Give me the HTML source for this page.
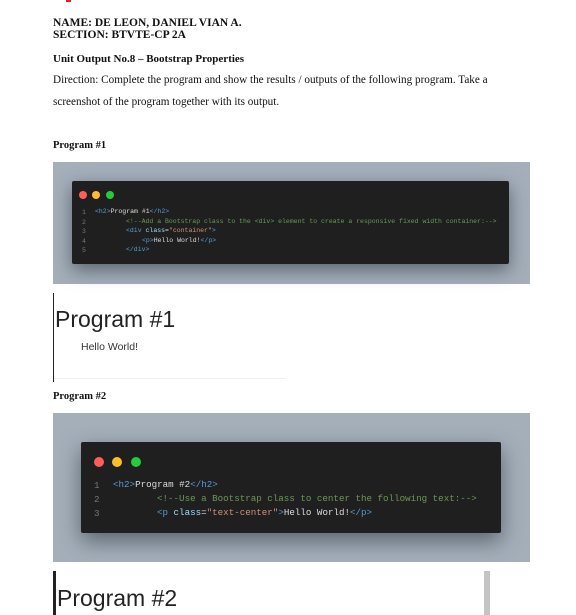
<!DOCTYPE html><html><head><style>
body{margin:0;width:576px;height:615px;background:#fff;position:relative;overflow:hidden;font-family:"Liberation Serif",serif;color:#111}
.a{position:absolute;white-space:nowrap}
.b{font-weight:bold}
.d{position:absolute;border-radius:50%}
.sans{font-family:"Liberation Sans",sans-serif}
.c1{position:absolute;font-family:"Liberation Mono",monospace;font-size:6.5px;color:#ddd;white-space:nowrap}
.c2{position:absolute;font-family:"Liberation Mono",monospace;font-size:9.2px;color:#ddd;white-space:nowrap}
.k{color:#569cd6}.g{color:#6a9955}.s{color:#ce9178}.n{color:#777}.t{color:#9cdcfe}
</style></head><body>
<div class="a" style="left:66px;top:0;width:5px;height:2px;background:#d22"></div>
<div class="a b" style="left:53px;top:17px;font-size:11.5px;line-height:12px">NAME: DE LEON, DANIEL VIAN A.<br>SECTION: BTVTE-CP 2A</div>
<div class="a b" style="left:53px;top:53px;font-size:11px">Unit Output No.8 – Bootstrap Properties</div>
<div class="a" style="left:53px;top:74px;font-size:11.2px">Direction: Complete the program and show the results / outputs of the following program. Take a</div>
<div class="a" style="left:53px;top:96px;font-size:11.2px">screenshot of the program together with its output.</div>
<div class="a b" style="left:53px;top:140px;font-size:10.5px">Program #1</div>

<div class="a" style="left:53px;top:162px;width:477px;height:122px;background:#a4afba"></div>
<div class="a" style="left:72px;top:181px;width:437px;height:83px;background:#1f1f1f;border-radius:2px;box-shadow:0 6px 18px rgba(40,50,60,.6)"></div>
<div class="d" style="left:79px;top:191px;width:8px;height:8px;background:#ff5f56"></div>
<div class="d" style="left:92px;top:191px;width:8px;height:8px;background:#ffbd2e"></div>
<div class="d" style="left:106px;top:191px;width:8px;height:8px;background:#27c93f"></div>
<div class="c1 n" style="left:82px;top:208px;line-height:9.6px">1<br>2<br>3<br>4<br>5</div>
<div class="c1" style="left:95px;top:208px"><span class="k">&lt;h2&gt;</span>Program #1<span class="k">&lt;/h2&gt;</span></div>
<div class="c1 g" style="left:126px;top:217.6px">&lt;!--Add a Bootstrap class to the &lt;div&gt; element to create a responsive fixed width container:--&gt;</div>
<div class="c1" style="left:126px;top:227.2px"><span class="k">&lt;div</span> <span class="t">class</span>=<span class="s">"container"</span><span class="k">&gt;</span></div>
<div class="c1" style="left:142px;top:236.8px"><span class="k">&lt;p&gt;</span>Hello World!<span class="k">&lt;/p&gt;</span></div>
<div class="c1" style="left:126px;top:246.4px"><span class="k">&lt;/div&gt;</span></div>

<div class="a" style="left:53px;top:293px;width:1px;height:89px;background:#222"></div>
<div class="a sans" style="left:55px;top:306px;font-size:23px;color:#222">Program #1</div>
<div class="a sans" style="left:81px;top:341px;font-size:10.5px;color:#333">Hello World!</div>
<div class="a" style="left:54px;top:378px;width:231px;height:1px;background:#eee"></div>

<div class="a b" style="left:53px;top:391px;font-size:10.5px">Program #2</div>
<div class="a" style="left:53px;top:413px;width:477px;height:149px;background:#a4afba"></div>
<div class="a" style="left:81px;top:442px;width:420px;height:91px;background:#1f1f1f;border-radius:2px;box-shadow:0 8px 22px rgba(40,50,60,.6)"></div>
<div class="d" style="left:94px;top:457px;width:10px;height:10px;background:#ff5f56"></div>
<div class="d" style="left:112px;top:457px;width:10px;height:10px;background:#ffbd2e"></div>
<div class="d" style="left:131px;top:457px;width:10px;height:10px;background:#27c93f"></div>
<div class="c2 n" style="left:94px;top:479px;line-height:14px">1<br>2<br>3</div>
<div class="c2" style="left:113px;top:479px"><span class="k">&lt;h2&gt;</span>Program #2<span class="k">&lt;/h2&gt;</span></div>
<div class="c2 g" style="left:157px;top:493px">&lt;!--Use a Bootstrap class to center the following text:--&gt;</div>
<div class="c2" style="left:157px;top:507px"><span class="k">&lt;p</span> <span class="t">class</span>=<span class="s">"text-center"</span><span class="k">&gt;</span>Hello World!<span class="k">&lt;/p&gt;</span></div>

<div class="a" style="left:53px;top:571px;width:3px;height:44px;background:#222"></div>
<div class="a sans" style="left:57px;top:585px;font-size:23px;color:#222">Program #2</div>
<div class="a" style="left:484px;top:571px;width:6px;height:44px;background:#c4c4c4"></div>
</body></html>
